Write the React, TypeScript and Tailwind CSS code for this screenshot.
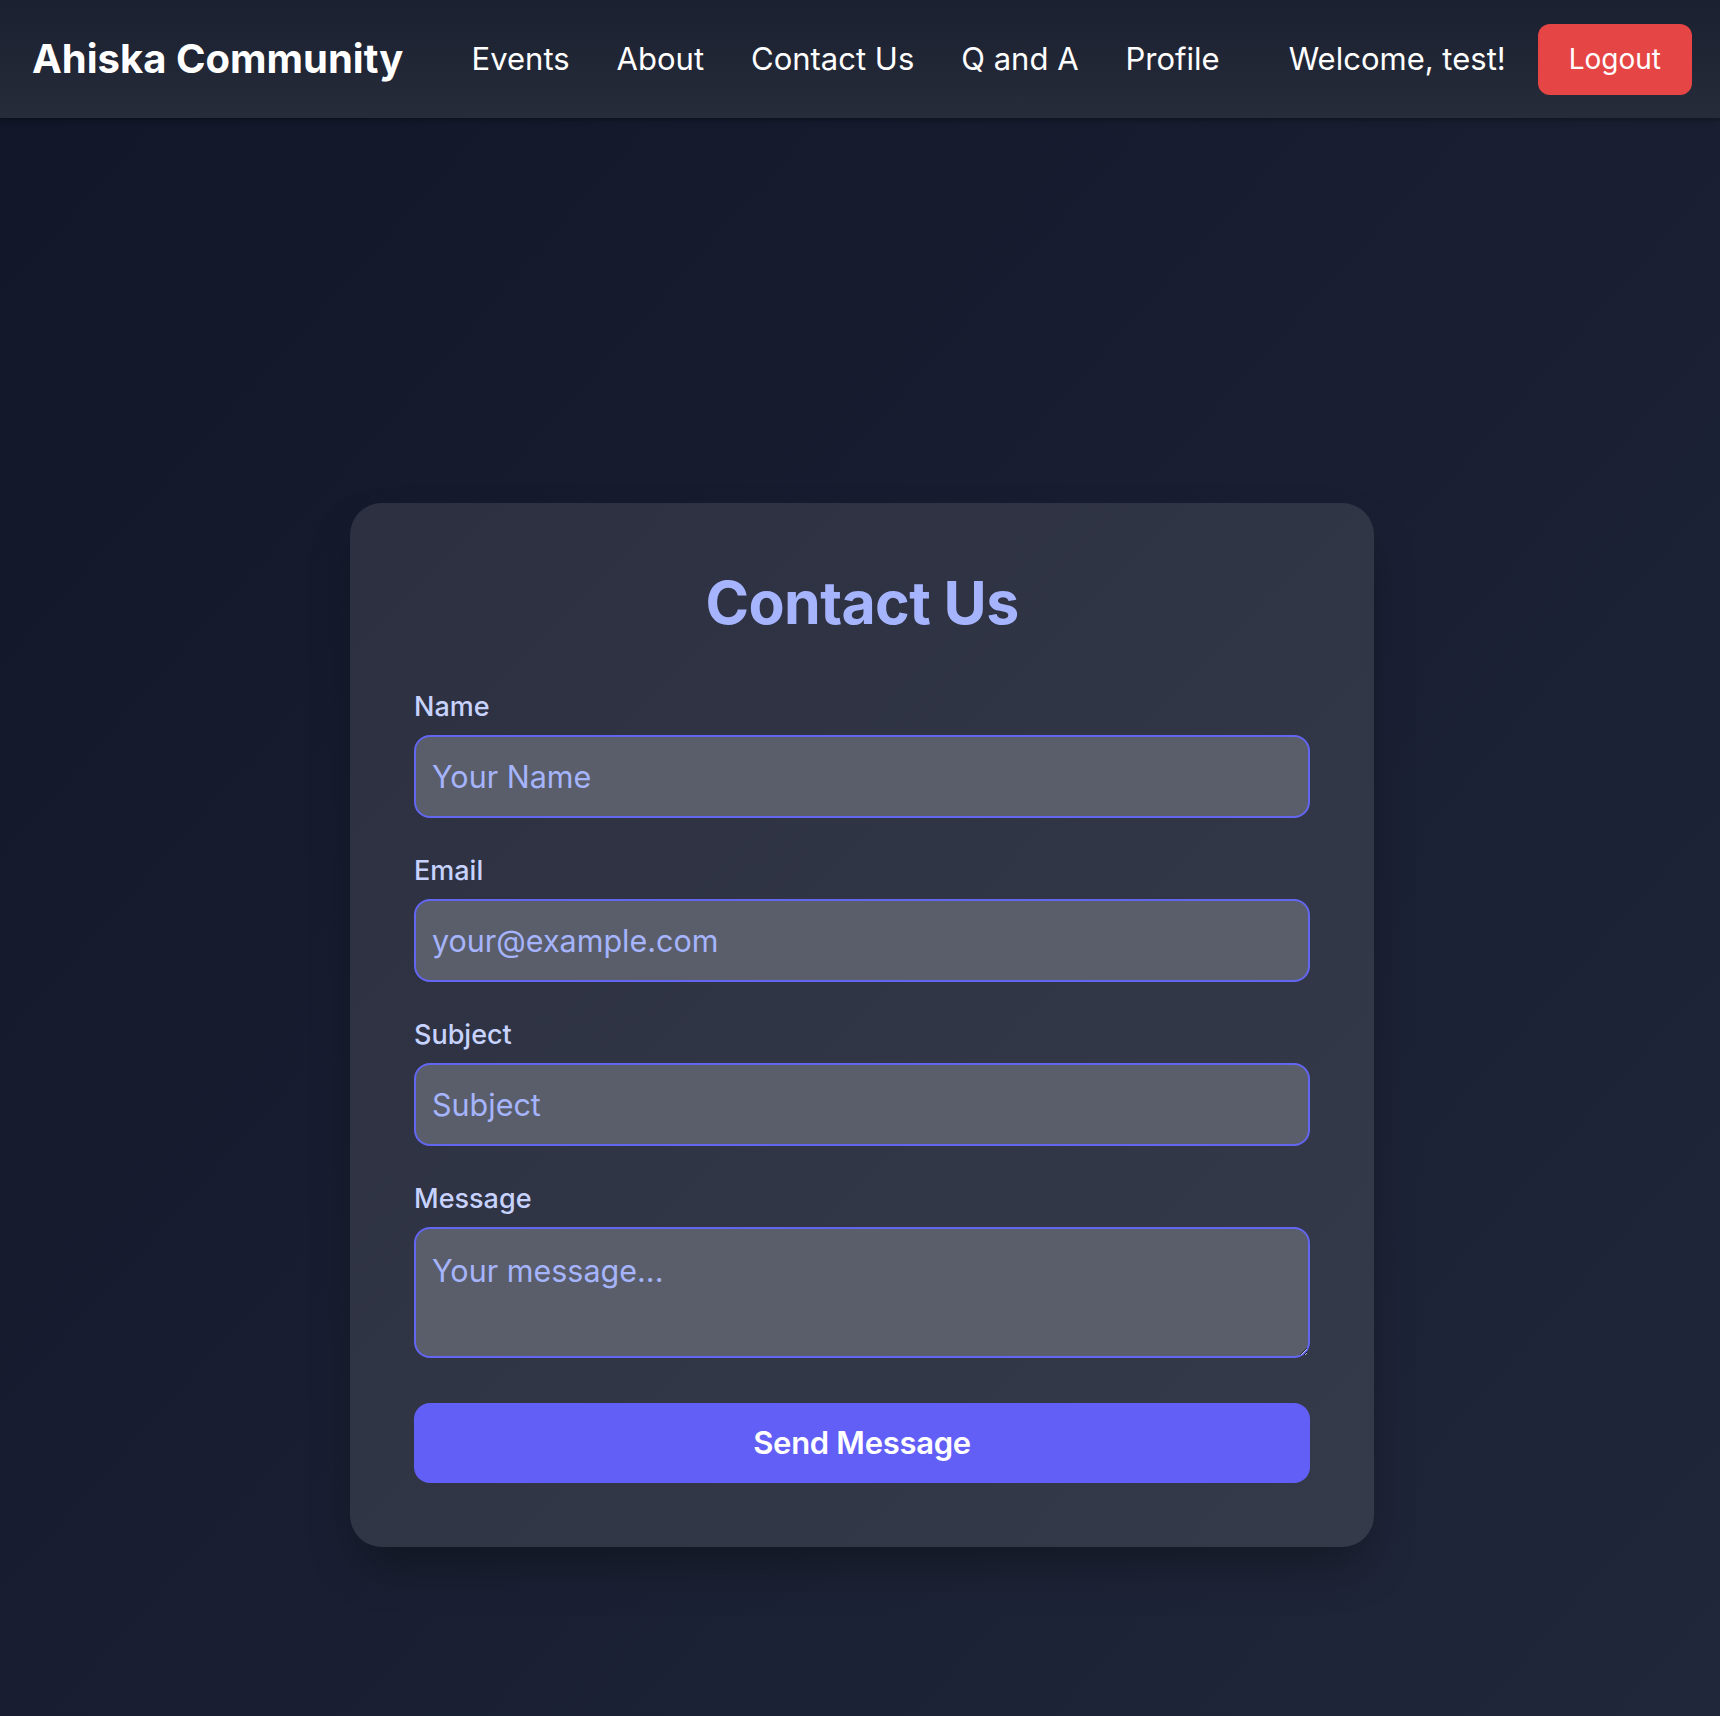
import React from "react";

export default function App() {
  const links = ["Events", "About", "Contact Us", "Q and A", "Profile"];
  const fields = [
    { label: "Name", placeholder: "Your Name", type: "text" },
    { label: "Email", placeholder: "your@example.com", type: "email" },
    { label: "Subject", placeholder: "Subject", type: "text" },
  ];
  return (
    <div className="min-h-screen bg-gradient-to-br from-[#111628] to-[#21283b] font-['Inter','Noto_Sans',sans-serif]">
      <nav className="h-[118px] flex items-center justify-between pl-8 pr-7 bg-gradient-to-b from-[#1b2030] to-[#272c3b] shadow-[0_2px_6px_rgba(0,0,0,0.35)]">
        <div className="text-[40px] font-bold text-white leading-none">Ahiska Community</div>
        <div className="flex items-center">
          <div className="flex items-center gap-[47px] text-[31px] text-white">
            {links.map((l) => (
              <a key={l} className="leading-[44px]">
                {l}
              </a>
            ))}
          </div>
          <div className="flex items-center gap-8 ml-[69px]">
            <span className="text-[31px] text-white leading-[44px]">Welcome, test!</span>
            <button className="h-[71px] px-[31px] rounded-xl bg-[#e64545] text-white text-[28px] leading-[40px]">
              Logout
            </button>
          </div>
        </div>
      </nav>
      <main className="flex justify-center pl-[4px] pt-[385px] pb-[385px]">
        <div className="w-[1024px] rounded-[32px] p-16 bg-gradient-to-br from-[#2c3041] to-[#353a4a] shadow-[0_25px_50px_-12px_rgba(0,0,0,0.35)]">
          <h1 className="text-[59px] leading-[72px] font-bold text-center text-[#a5b4fc] tracking-[-0.6px] mb-[48px]">Contact Us</h1>
          <form className="flex flex-col" onSubmit={(e) => e.preventDefault()}>
            {fields.map((f) => (
              <div key={f.label} className="mb-[33px]">
                <label className="block text-[27px] leading-[40px] font-medium text-[#c7d2fe] mb-[8px]">{f.label}</label>
                <input
                  type={f.type}
                  placeholder={f.placeholder}
                  className="block w-full h-[83px] rounded-2xl border-2 border-[#6366f1] bg-[#5a5e6b] px-4 text-[30.5px] text-white placeholder:text-[#a5b4fc] outline-none"
                />
              </div>
            ))}
            <div>
              <label className="block text-[27px] leading-[40px] font-medium text-[#c7d2fe] mb-[8px]">Message</label>
              <textarea
                placeholder="Your message..."
                className="block w-full h-[131px] rounded-2xl border-2 border-[#6366f1] bg-[#5a5e6b] px-4 pt-[18px] text-[30.5px] leading-[48px] text-white placeholder:text-[#a5b4fc] outline-none"
              />
            </div>
            <button
              type="submit"
              className="mt-[45px] h-[80px] w-full rounded-2xl bg-[#625ff7] text-white text-[31px] font-semibold tracking-[-0.3px]"
            >
              Send Message
            </button>
          </form>
        </div>
      </main>
    </div>
  );
}
